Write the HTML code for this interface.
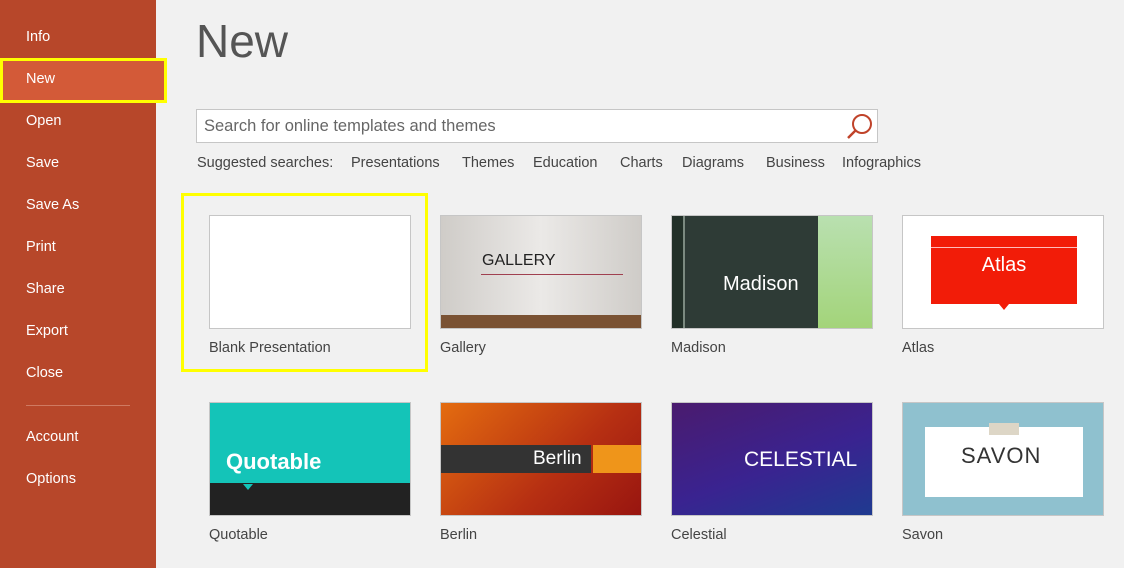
<!DOCTYPE html><html><head><style>
*{margin:0;padding:0;box-sizing:border-box}
body{width:1124px;height:568px;background:#f1f1f1;font-family:"Liberation Sans",sans-serif;position:relative;overflow:hidden}
.side{position:absolute;left:0;top:0;width:156px;height:568px;background:#b7472a}
.side div{position:absolute;left:26px;color:#fff;font-size:14.5px}
.a{position:absolute}
.t{position:absolute;width:202px;height:114px;border:1px solid #c6c6c6;overflow:hidden}
.l{position:absolute;font-size:14.5px;color:#444}
.s{position:absolute;top:155px;font-size:14.5px;color:#444}
</style></head><body>
<div class="side">
<div style="top:29px">Info</div>
<div class="a" style="left:0;top:58px;width:167px;height:45px;background:#d35a38;border:3px solid #ffff00"></div>
<div style="top:71px">New</div>
<div style="top:113px">Open</div>
<div style="top:155px">Save</div>
<div style="top:197px">Save As</div>
<div style="top:239px">Print</div>
<div style="top:281px">Share</div>
<div style="top:323px">Export</div>
<div style="top:365px">Close</div>
<div class="a" style="left:26px;top:405px;width:104px;height:1px;background:#cf7a62"></div>
<div style="top:429px">Account</div>
<div style="top:471px">Options</div>
</div>
<div class="a" style="left:196px;top:14px;font-size:46px;color:#555">New</div>
<div class="a" style="left:196px;top:109px;width:682px;height:34px;background:#fff;border:1px solid #c6c6c6;font-size:16.5px;color:#666;padding:7px 0 0 7px">Search for online templates and themes</div>
<svg class="a" style="left:845px;top:111px" width="30" height="30"><circle cx="17" cy="13" r="9" fill="none" stroke="#c0432a" stroke-width="2"/><line x1="10.5" y1="19.5" x2="3" y2="27" stroke="#c0432a" stroke-width="2.5"/></svg>
<div class="s" style="left:197px">Suggested searches:</div>
<div class="s" style="left:351px">Presentations</div>
<div class="s" style="left:462px">Themes</div>
<div class="s" style="left:533px">Education</div>
<div class="s" style="left:620px">Charts</div>
<div class="s" style="left:682px">Diagrams</div>
<div class="s" style="left:766px">Business</div>
<div class="s" style="left:842px">Infographics</div>
<div class="a" style="left:181px;top:193px;width:247px;height:179px;border:3px solid #ffff00"></div>
<div class="t" style="left:209px;top:215px;background:#fff"></div>
<div class="l" style="left:209px;top:340px">Blank Presentation</div>
<div class="t" style="left:440px;top:215px;background:linear-gradient(90deg,#cfccc8,#ebe9e7 50%,#cfccc8)"><div class="a" style="left:0;bottom:0;width:100%;height:13px;background:#7a5233"></div><div class="a" style="left:41px;top:36px;font-size:16px;color:#222">GALLERY</div><div class="a" style="left:40px;top:58px;width:142px;height:1px;background:#a04050"></div></div>
<div class="l" style="left:440px;top:340px">Gallery</div>
<div class="t" style="left:671px;top:215px;background:#2e3b36"><div class="a" style="left:0;top:0;width:13px;height:100%;background:#223028;border-right:2px solid #7b8a80"></div><div class="a" style="right:0;top:0;width:54px;height:100%;background:linear-gradient(#b9e0b0,#a3d47a)"></div><div class="a" style="left:51px;top:57px;font-size:20px;color:#fff">Madison</div></div>
<div class="l" style="left:671px;top:340px">Madison</div>
<div class="t" style="left:902px;top:215px;background:#fff"><div class="a" style="left:28px;top:20px;width:146px;height:68px;background:#f21c08"><div class="a" style="left:0;top:11px;width:100%;height:1px;background:#fbb"></div><div style="text-align:center;color:#fff;font-size:20px;margin-top:18px">Atlas</div></div><div class="a" style="left:96px;top:88px;width:0;height:0;border-left:5px solid transparent;border-right:5px solid transparent;border-top:6px solid #f21c08"></div></div>
<div class="l" style="left:902px;top:340px">Atlas</div>
<div class="t" style="left:209px;top:402px;background:#14c4b8"><div class="a" style="left:0;bottom:0;width:100%;height:32px;background:#222"></div><div class="a" style="left:16px;top:46px;font-size:22px;color:#fff;font-weight:bold">Quotable</div><div class="a" style="left:33px;top:81px;width:0;height:0;border-left:5px solid transparent;border-right:5px solid transparent;border-top:6px solid #14c4b8"></div></div>
<div class="l" style="left:209px;top:527px">Quotable</div>
<div class="t" style="left:440px;top:402px;background:linear-gradient(135deg,#e46c10,#b62f12 60%,#981510)"><div class="a" style="left:0;top:42px;width:150px;height:28px;background:#333"></div><div class="a" style="left:152px;top:42px;width:50px;height:28px;background:#ef951a"></div><div class="a" style="left:92px;top:45px;font-size:19px;color:#fff">Berlin</div></div>
<div class="l" style="left:440px;top:527px">Berlin</div>
<div class="t" style="left:671px;top:402px;background:linear-gradient(160deg,#4a1b6e,#3a2390 55%,#1f3a90)"><div class="a" style="left:72px;top:45px;font-size:21px;color:#fff">CELESTIAL</div></div>
<div class="l" style="left:671px;top:527px">Celestial</div>
<div class="t" style="left:902px;top:402px;background:#8fc1cf"><div class="a" style="left:22px;top:24px;width:158px;height:70px;background:#fff"></div><div class="a" style="left:86px;top:20px;width:30px;height:12px;background:#ddd6c6"></div><div class="a" style="left:58px;top:40px;font-size:22px;color:#333;letter-spacing:1px">SAVON</div></div>
<div class="l" style="left:902px;top:527px">Savon</div>
</body></html>
